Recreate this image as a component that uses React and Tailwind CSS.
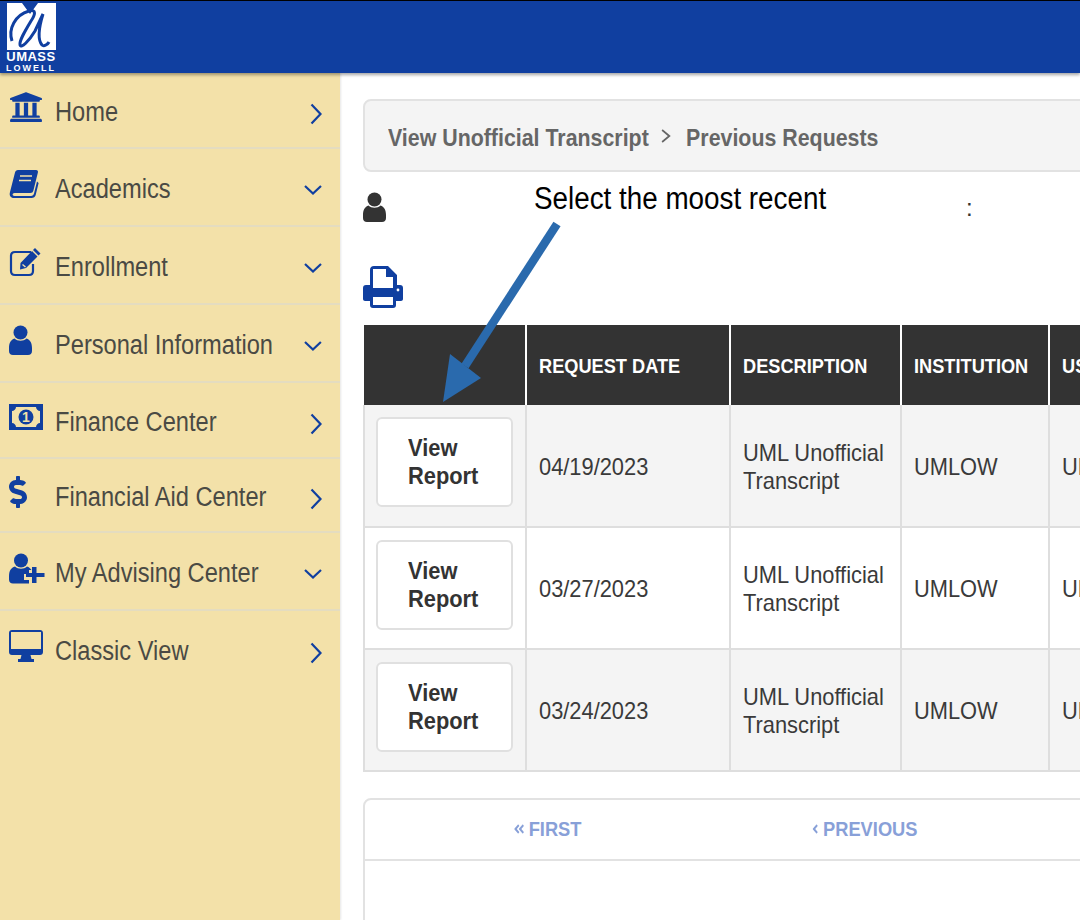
import {
  FaUniversity,
  FaDollarSign,
  FaAngleDoubleLeft,
  FaAngleLeft,
} from 'react-icons/fa';

const NAV_BG = '#f3e1a9';

// the old Font Awesome 4 glyphs the site uses, react-icons only has the newer shapes
const BookIcon = ({ className }) => (
  <svg viewBox="0 0 30 30" className={className} fill="currentColor">
    <path d="M9 1H27C28.6 1 29.3 2 28.9 3.5L24.4 21.5C24 23.2 23 24 21.3 24H5.5C3 24 3 27 5.5 27H22C23.6 27 24.6 26 25 24.6L28 12.5L29.6 14L26.7 26C26.2 28 24.6 29 22.6 29H5C1.5 29 0 26.6 1 23L6 3.5C6.4 2 7.4 1 9 1Z" />
    <path d="M11 7H23M10 11.5H22" stroke={NAV_BG} strokeWidth="1.6" />
  </svg>
);

const EditIcon = ({ className }) => (
  <svg viewBox="0 0 32 30" className={className}>
    <path
      d="M22 5H6C3.5 5 2 6.5 2 9V24C2 26.5 3.5 28 6 28H20C22.5 28 24 26.5 24 24V17"
      fill="none"
      stroke="currentColor"
      strokeWidth="2.2"
    />
    <path d="M26 1L31.5 6.5L29.5 8.5L24 3ZM23 4L28.5 9.5L17 21L11 22.5L11.5 16Z" fill="currentColor" />
    <path d="M13.5 17.5L16.5 20" stroke={NAV_BG} strokeWidth="1.4" />
  </svg>
);

const UserIcon = ({ className }) => (
  <svg viewBox="0 0 23 30" className={className} fill="currentColor">
    <circle cx="11.5" cy="7.5" r="7" />
    <path d="M5.5 13.5C8.5 16.5 14.5 16.5 17.5 13.5C21 14.5 23 18 23 23V26C23 28.5 21.5 30 19 30H4C1.5 30 0 28.5 0 26V23C0 18 2 14.5 5.5 13.5Z" />
  </svg>
);

const UserPlusIcon = ({ className }) => (
  <svg viewBox="0 0 36 31" className={className} fill="currentColor">
    <circle cx="12" cy="7.5" r="7" />
    <path d="M6 13.5C9 16.5 15 16.5 18 13.5C20 14 21.5 15.5 22.5 17H20V21H15V27H20V30.5H4C1.5 30.5 0 29 0 26.5V23C0 18 2 14.5 6 13.5Z" />
    <path d="M23 14H27.5V20H35.5V24H27.5V30H23V24H17V20H23Z" />
  </svg>
);

const MoneyIcon = ({ className }) => (
  <svg viewBox="0 0 34 26" className={className}>
    <path fillRule="evenodd" fill="currentColor" d="M0 0H34V26H0ZM7 3C7 5 5 7 3 7V19C5 19 7 21 7 23H27C27 21 29 19 31 19V7C29 7 27 5 27 3Z" />
    <circle cx="17" cy="13" r="7.5" fill="currentColor" />
    <text x="17" y="18" textAnchor="middle" fontSize="14" fontWeight="700" fill={NAV_BG}>1</text>
  </svg>
);

const DesktopIcon = ({ className }) => (
  <svg viewBox="0 0 34 33" className={className} fill="currentColor">
    <path fillRule="evenodd" d="M3 0H31C32.8 0 34 1.2 34 3V22C34 23.8 32.8 25 31 25H21.5L22.5 29H25V32H9V29H11.5L12.5 25H3C1.2 25 0 23.8 0 22V3C0 1.2 1.2 0 3 0ZM2 2V19H32V2Z" />
  </svg>
);

const PrinterIcon = ({ className }) => (
  <svg viewBox="0 0 40 42" className={className} fill="currentColor">
    <path fillRule="evenodd" d="M11 0H25L34 9V19H37C39 19 40 20 40 22V33C40 34 39 35 38 35H33V39C33 41 32 42 30 42H10C8 42 7 41 7 39V35H2C1 35 0 34 0 33V22C0 20 1 19 3 19H7V4C7 1.5 8.5 0 11 0ZM10 3V22H30V11H23V3ZM10 31V39H30V31Z" />
    <circle cx="35" cy="24" r="1.4" fill="#fff" />
  </svg>
);

const Right = () => (
  <svg viewBox="0 0 12 22" className="w-[12px] h-[22px] mt-[4px]" fill="none" stroke="#103fa0" strokeWidth="2.2">
    <path d="M1.5 1.5L10.5 11L1.5 20.5" />
  </svg>
);

const Down = () => (
  <svg viewBox="0 0 18 10" className="w-[18px] h-[10px] mt-[2px]" fill="none" stroke="#103fa0" strokeWidth="2.2">
    <path d="M1 1L9 8.5L17 1" />
  </svg>
);

const navItems = [
  { label: 'Home', icon: FaUniversity, iconClass: 'w-[34px] h-[36px]', open: false, rowClass: 'h-[76px]' },
  { label: 'Academics', icon: BookIcon, iconClass: 'w-[30px] h-[30px]', open: true, rowClass: 'h-[78px]' },
  { label: 'Enrollment', icon: EditIcon, iconClass: 'w-[32px] h-[30px]', open: true, rowClass: 'h-[78px]' },
  { label: 'Personal Information', icon: UserIcon, iconClass: 'w-[23px] h-[30px]', open: true, rowClass: 'h-[78px]' },
  { label: 'Finance Center', icon: MoneyIcon, iconClass: 'w-[34px] h-[26px]', open: false, rowClass: 'h-[76px]' },
  { label: 'Financial Aid Center', icon: FaDollarSign, iconClass: 'w-[18px] h-[36px]', open: false, rowClass: 'h-[74px]' },
  { label: 'My Advising Center', icon: UserPlusIcon, iconClass: 'w-[36px] h-[31px]', open: true, rowClass: 'h-[78px]' },
  { label: 'Classic View', icon: DesktopIcon, iconClass: 'w-[34px] h-[33px]', open: false, rowClass: 'h-[76px]' },
];

const requests = [
  { date: '04/19/2023', shaded: true },
  { date: '03/27/2023', shaded: false },
  { date: '03/24/2023', shaded: true },
];

const Logo = () => (
  <div className="w-[50px] flex flex-col items-center text-white leading-none">
    <svg viewBox="0 0 49 47" className="w-[49px] h-[47px]">
      <path d="M0 0H15L23 11L31 0H49V47H0Z" fill="#fff" />
      <path
        d="M5 38C1 26 8 12 22 8C30 6 28 12 24 18C18 28 12 38 13 42C14 46 22 38 28 28L36 11C32 24 30 36 35 42C37 44 41 41 42 39"
        fill="none"
        stroke="#103fa0"
        strokeWidth="3"
      />
    </svg>
    <span className="text-[13px] font-bold tracking-[0.5px]">UMASS</span>
    <span className="text-[9px] font-bold tracking-[2px] mt-[1px]">LOWELL</span>
  </div>
);

const Sidebar = () => (
  <aside className="w-[340px] shrink-0 bg-[#f3e1a9] shadow-[1px_0_2px_rgba(0,0,0,0.1)]">
    {navItems.map((item, i) => (
      <div
        key={item.label}
        className={`${item.rowClass} relative flex items-center pl-[9px] pr-[18px] pt-[4px] ${
          i < navItems.length - 1 ? 'border-b-2 border-[#e4dcc0]' : ''
        }`}
      >
        <div className="w-[46px] shrink-0 flex items-center -mt-[10px]">
          <item.icon className={`${item.iconClass} text-[#103fa0]`} />
        </div>
        <span className="flex-1 origin-left scale-x-[0.875] whitespace-nowrap text-[27px] text-[#4a4a44]">
          {item.label}
        </span>
        {item.open ? <Down /> : <Right />}
      </div>
    ))}
  </aside>
);

const Squeezed = ({ children }) => (
  <span className="inline-block origin-left scale-x-[0.91] whitespace-nowrap">{children}</span>
);

const headCell = 'border-l-2 border-white px-[12px] pt-[2px] text-left text-[20px] font-bold text-white';
const bodyCell = 'border-l-2 border-[#dedede] px-[12px] pt-[2px] text-[24px] leading-[28px] text-[#3a3a3a]';

const RequestsTable = () => (
  <table className="table-fixed w-[860px] border-collapse">
    <colgroup>
      <col className="w-[162px]" />
      <col className="w-[204px]" />
      <col className="w-[171px]" />
      <col className="w-[148px]" />
      <col />
    </colgroup>
    <thead>
      <tr className="h-[80px] bg-[#333333]">
        <th />
        {['REQUEST DATE', 'DESCRIPTION', 'INSTITUTION', 'USER'].map((title) => (
          <th key={title} className={headCell}>
            <Squeezed>{title}</Squeezed>
          </th>
        ))}
      </tr>
    </thead>
    <tbody>
      {requests.map((row) => (
        <tr
          key={row.date}
          className={`h-[122px] border-b-2 border-[#dedede] ${row.shaded ? 'bg-[#f4f4f4]' : 'bg-white'}`}
        >
          <td className="border-l-2 border-[#dedede] pl-[11px] pb-[7px]">
            <button className="block w-[137px] h-[90px] rounded-md border-2 border-[#e0e0e0] bg-white pl-[30px] text-left text-[24px] leading-[28px] font-bold text-[#333]">
              <Squeezed>
                View
                <br />
                Report
              </Squeezed>
            </button>
          </td>
          <td className={bodyCell}>
            <Squeezed>{row.date}</Squeezed>
          </td>
          <td className={bodyCell}>
            <Squeezed>
              UML Unofficial
              <br />
              Transcript
            </Squeezed>
          </td>
          <td className={bodyCell}>
            <Squeezed>UMLOW</Squeezed>
          </td>
          <td className={bodyCell}>
            <Squeezed>UMLOW</Squeezed>
          </td>
        </tr>
      ))}
    </tbody>
  </table>
);

const App = () => (
  <div
    className="relative w-[1080px] h-[920px] overflow-hidden bg-white flex flex-col"
    style={{ fontFamily: '"Liberation Sans", Arial, sans-serif' }}
  >
    <header className="h-[73px] shrink-0 bg-[#103fa0] border-t border-black pl-[6px] pt-[2px] shadow-[0_2px_3px_rgba(0,0,0,0.35)] z-10">
      <Logo />
    </header>

    <div className="flex flex-1 min-h-0">
      <Sidebar />

      <main className="relative flex-1 min-w-0 pl-[23px] pt-[26px]">
        <div className="w-[800px] h-[73px] rounded-lg border-2 border-[#e2e2e2] bg-[#f4f4f4] pl-[23px] pt-[4px] flex items-center">
          <div className="flex items-center origin-left scale-x-[0.89] whitespace-nowrap text-[24px] font-bold text-[#666666]">
            <span>View Unofficial Transcript</span>
            <svg viewBox="0 0 12 16" className="w-[12px] h-[16px] ml-[13px] mr-[17px] -mt-[4px]" fill="none" stroke="#666666" strokeWidth="2">
              <path d="M2 2L10 8L2 14" />
            </svg>
            <span>Previous Requests</span>
          </div>
        </div>

        <div className="h-[153px] flex flex-col pt-[20px]">
          <UserIcon className="w-[23px] h-[30px] text-[#333333]" />
          <PrinterIcon className="w-[40px] h-[42px] mt-[44px] text-[#103fa0]" />
        </div>

        <RequestsTable />

        <div className="mt-[26px] w-[800px] h-[160px] rounded-lg border-2 border-[#e2e2e2]">
          <div className="h-[61px] border-b-2 border-[#e2e2e2] pb-[2px] flex items-center text-[21px] font-bold text-[#88a0d8]">
            <span className="ml-[148px] flex items-center gap-[4px] origin-left scale-x-[0.87]">
              <FaAngleDoubleLeft className="w-[14px] h-[14px]" />
              FIRST
            </span>
            <span className="ml-[218px] flex items-center gap-[3px] origin-left scale-x-[0.87]">
              <FaAngleLeft className="w-[12px] h-[14px]" />
              PREVIOUS
            </span>
          </div>
        </div>

        {/* annotation pasted over the screenshot */}
        <span className="absolute left-[194px] top-[103px] origin-left scale-x-[0.897] text-[31px] text-black whitespace-nowrap">
          Select the moost recent
        </span>
        <span className="absolute left-[626px] top-[117px] text-[24px] text-[#333]">:</span>
        <svg className="absolute left-[90px] top-[140px] w-[140px] h-[200px]" viewBox="0 0 140 200">
          <path d="M127 11L35 153" fill="none" stroke="#2a6aad" strokeWidth="8.5" />
          <path d="M13 189L20 141L51 165Z" fill="#2a6aad" />
        </svg>
      </main>
    </div>
  </div>
);

export default App;
